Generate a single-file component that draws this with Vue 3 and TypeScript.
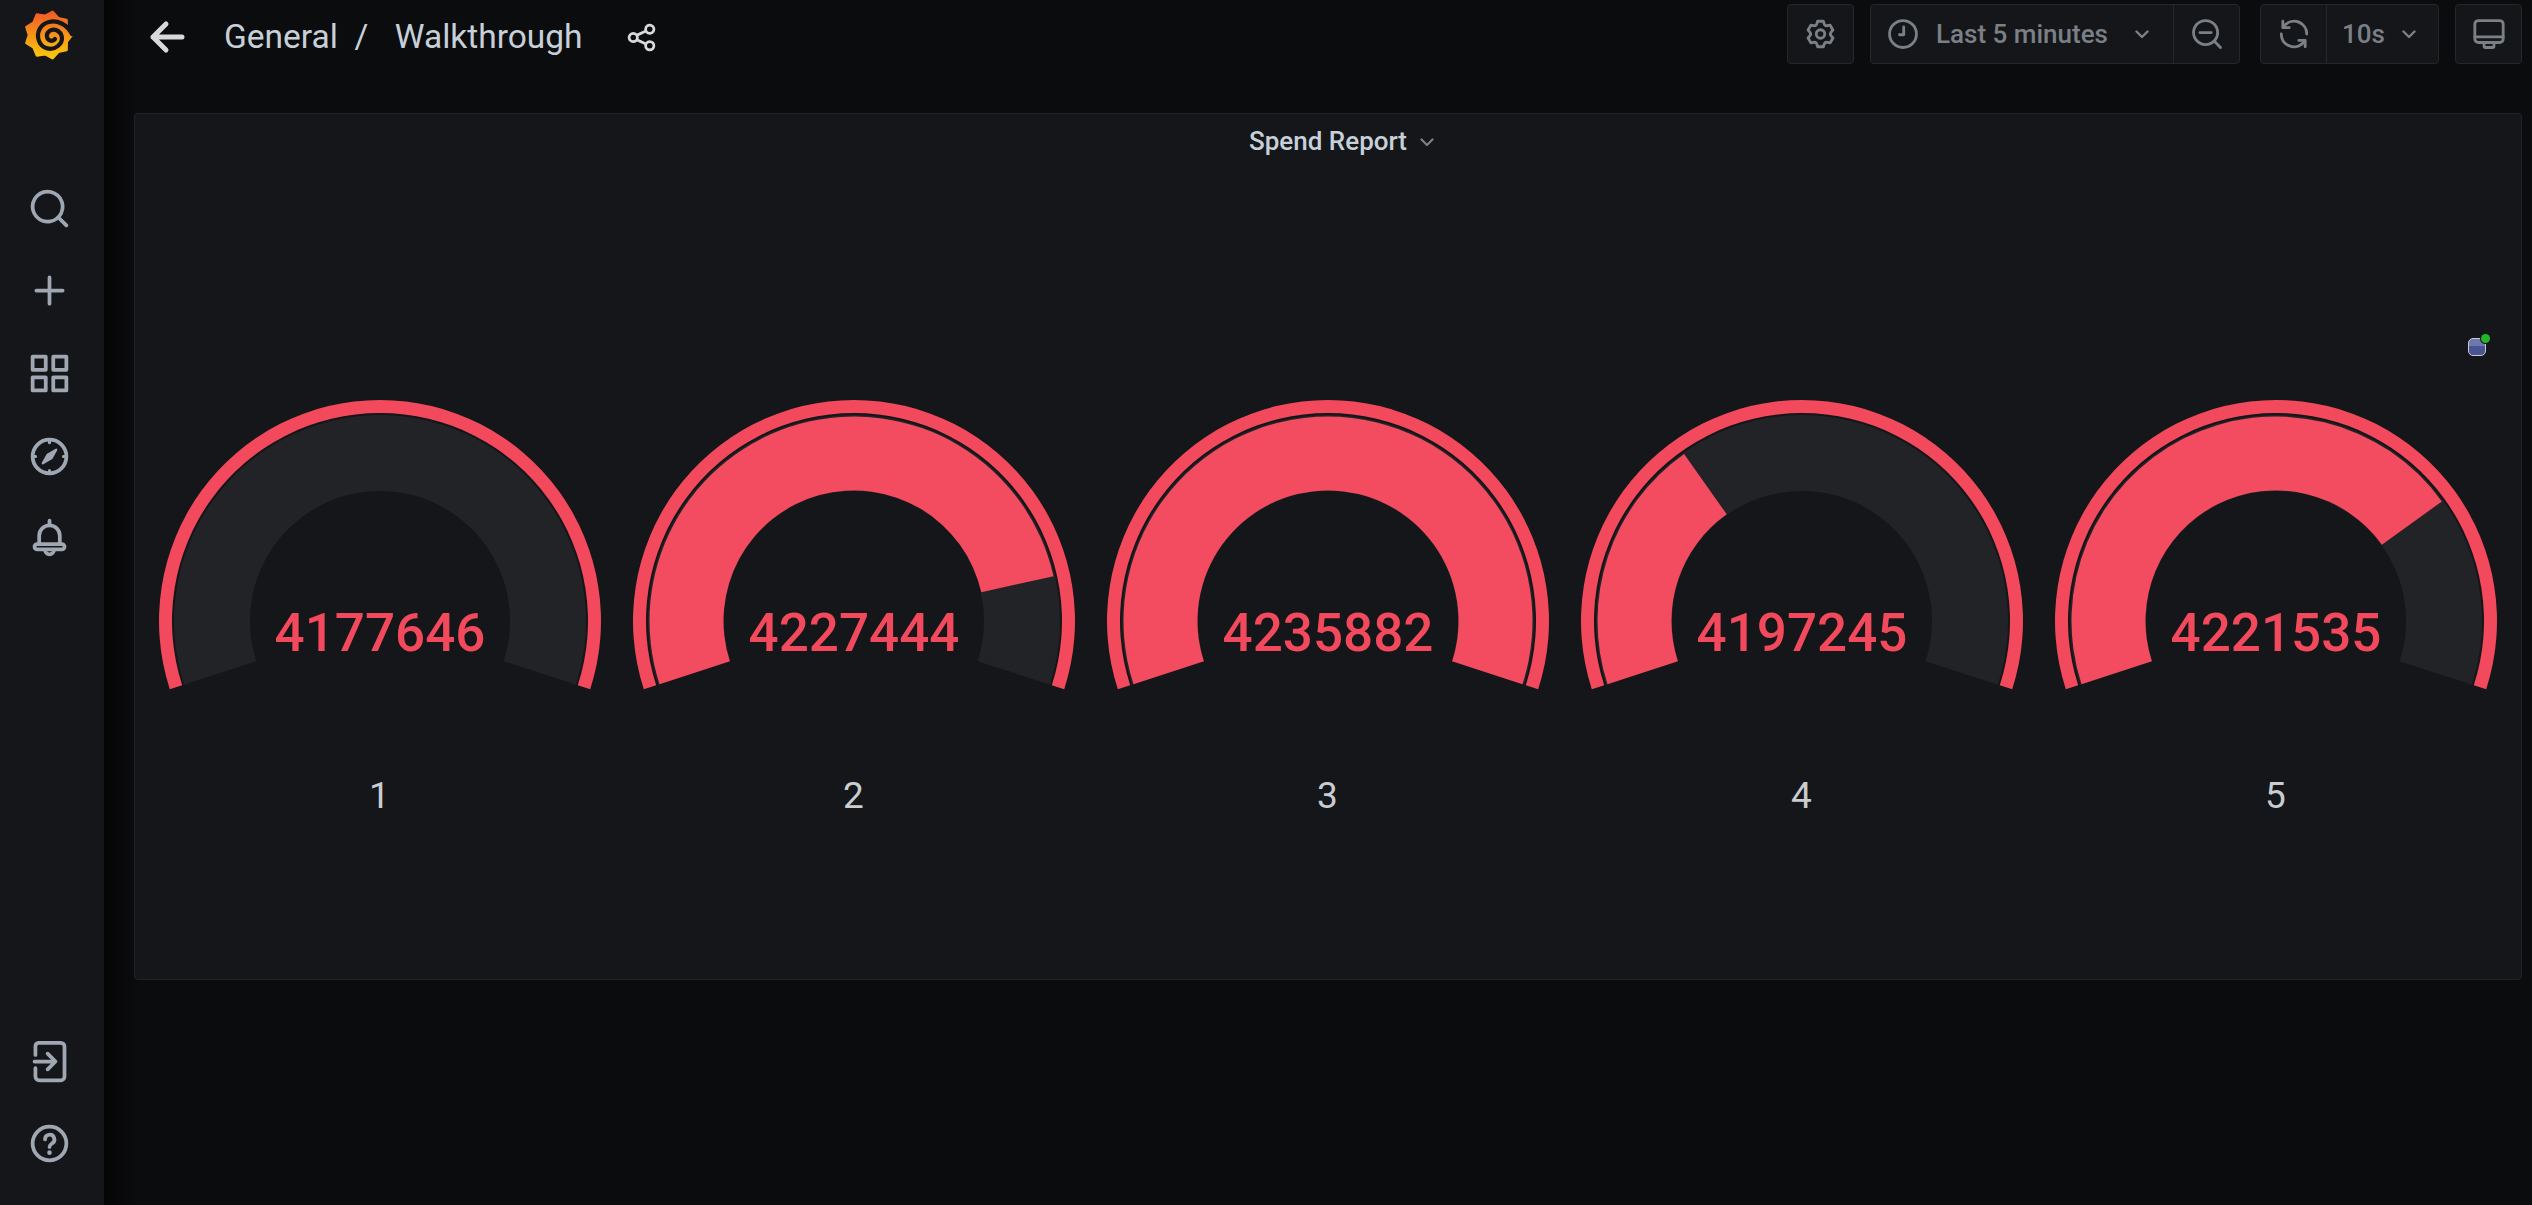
<script setup lang="ts">
interface Gauge {
  label: string
  value: number
  fraction: number
}

const gauges: Gauge[] = [
  { label: '1', value: 4177646, fraction: 0 },
  { label: '2', value: 4227444, fraction: 0.858 },
  { label: '3', value: 4235882, fraction: 1 },
  { label: '4', value: 4197245, fraction: 0.337 },
  { label: '5', value: 4221535, fraction: 0.751 },
]

const CX = 237
const CY = 241
const START = 198
const SWEEP = 216

function pt(r: number, deg: number): string {
  const a = (deg * Math.PI) / 180
  return `${(CX + r * Math.cos(a)).toFixed(2)} ${(CY - r * Math.sin(a)).toFixed(2)}`
}

function sector(outer: number, inner: number, from: number, to: number): string {
  const a0 = START - SWEEP * from
  const a1 = START - SWEEP * to
  const large = Math.abs(a0 - a1) > 180 ? 1 : 0
  return [
    `M${pt(outer, a0)}`,
    `A${outer} ${outer} 0 ${large} 1 ${pt(outer, a1)}`,
    `L${pt(inner, a1)}`,
    `A${inner} ${inner} 0 ${large} 0 ${pt(inner, a0)}`,
    'Z',
  ].join(' ')
}

const ring = sector(221, 208, 0, 1)
const track = sector(206, 130, 0, 1)
const fillPath = (f: number): string => (f > 0 ? sector(204.5, 130.5, 0, f) : '')

function logoOutline(): string {
  const cx = 33.5
  const cy = 35
  const n = 9
  let d = ''
  for (let i = 0; i < n; i++) {
    const a = ((i / n) * 360 - 80) * (Math.PI / 180)
    const b = (((i + 0.5) / n) * 360 - 80) * (Math.PI / 180)
    const tip = `${(cx + 23.5 * Math.cos(a)).toFixed(1)} ${(cy + 23.5 * Math.sin(a)).toFixed(1)}`
    const val = `${(cx + 19.5 * Math.cos(b)).toFixed(1)} ${(cy + 19.5 * Math.sin(b)).toFixed(1)}`
    d += `${i === 0 ? 'M' : 'L'}${tip} L${val} `
  }
  return d + 'Z'
}
const logo = logoOutline()
</script>

<template>
  <div class="app">
    <aside class="sidebar">
      <svg class="logo" width="66" height="70" viewBox="0 0 66 70">
        <defs>
          <linearGradient id="logoGrad" x1="0" y1="0" x2="0" y2="1">
            <stop offset="0" stop-color="#f05a28" />
            <stop offset="1" stop-color="#fbca0a" />
          </linearGradient>
        </defs>
        <path :d="logo" fill="url(#logoGrad)" stroke="url(#logoGrad)" stroke-width="2.5" stroke-linejoin="round" />
        <path
          d="M57 34 C52 24 42 20 34 22 C25 24 21 33 24 41 C27 49 37 51 43 46 C49 41 48 33 41 30 C36 28.5 31 32 32 37 C33 41 38 42 40 39"
          fill="none"
          stroke="#141619"
          stroke-width="4.2"
          stroke-linecap="round"
        />
      </svg>

      <nav class="nav">
        <a class="nav-item">
          <svg class="nav-icon" viewBox="0 0 24 24"><path fill="currentColor" d="M21.71,20.29,18,16.61A9,9,0,1,0,16.61,18l3.68,3.68a1,1,0,0,0,1.42,0A1,1,0,0,0,21.71,20.29ZM11,18a7,7,0,1,1,7-7A7,7,0,0,1,11,18Z" /></svg>
        </a>
        <a class="nav-item">
          <svg class="nav-icon" viewBox="0 0 24 24"><path fill="currentColor" d="M19,11H13V5a1,1,0,0,0-2,0v6H5a1,1,0,0,0,0,2h6v6a1,1,0,0,0,2,0V13h6a1,1,0,0,0,0-2Z" /></svg>
        </a>
        <a class="nav-item">
          <svg class="nav-icon" viewBox="0 0 24 24"><path fill="currentColor" d="M10,13H3a1,1,0,0,0-1,1v7a1,1,0,0,0,1,1h7a1,1,0,0,0,1-1V14A1,1,0,0,0,10,13ZM9,20H4V15H9ZM21,2H14a1,1,0,0,0-1,1v7a1,1,0,0,0,1,1h7a1,1,0,0,0,1-1V3A1,1,0,0,0,21,2ZM20,9H15V4h5Zm1,4H14a1,1,0,0,0-1,1v7a1,1,0,0,0,1,1h7a1,1,0,0,0,1-1V14A1,1,0,0,0,21,13Zm-1,7H15V15h5ZM10,2H3A1,1,0,0,0,2,3v7a1,1,0,0,0,1,1h7a1,1,0,0,0,1-1V3A1,1,0,0,0,10,2ZM9,9H4V4H9Z" /></svg>
        </a>
        <a class="nav-item">
          <svg class="nav-icon" viewBox="0 0 24 24" fill="none" stroke="currentColor" stroke-width="2" stroke-linecap="round" stroke-linejoin="round">
            <circle cx="12" cy="12" r="9" />
            <path d="M12 3v1.6M12 19.4V21M3 12h1.6M19.4 12H21" stroke-width="1.6" />
            <path d="M15.6 8.4L13 13L8.4 15.6L11 11Z" fill="currentColor" stroke-width="1.2" />
          </svg>
        </a>
        <a class="nav-item">
          <svg class="nav-icon" viewBox="0 0 24 24" fill="none" stroke="currentColor" stroke-width="2" stroke-linecap="round" stroke-linejoin="round">
            <path d="M12 2.5v1.5" />
            <path d="M6.5 15V10.5a5.5 5.5 0 0 1 11 0V15" />
            <rect x="4" y="15" width="16" height="2.8" rx="1.4" />
            <path d="M9.6 18a2.4 2.4 0 0 0 4.8 0" />
          </svg>
        </a>
      </nav>

      <nav class="nav nav-bottom">
        <a class="nav-item">
          <svg class="nav-icon" viewBox="0 0 24 24" fill="none" stroke="currentColor" stroke-width="2" stroke-linecap="round" stroke-linejoin="round">
            <path d="M4.5 8.5V4a2 2 0 0 1 1.6-2H18a2 2 0 0 1 2 2V20a2 2 0 0 1-2 2H6.5a2 2 0 0 1-2-2V15.5" />
            <path d="M4 12H15M11 7.8L15.2 12L11 16.2" />
          </svg>
        </a>
        <a class="nav-item">
          <svg class="nav-icon" viewBox="0 0 24 24" fill="none" stroke="currentColor" stroke-width="2" stroke-linecap="round" stroke-linejoin="round">
            <circle cx="12" cy="12" r="9" />
            <path d="M9.6 9.8a2.5 2.5 0 1 1 3.7 2.2c-.8.5-1.3 1-1.3 1.8" />
            <path d="M12 16.8v.1" stroke-width="2.4" />
          </svg>
        </a>
      </nav>
    </aside>

    <main class="main">
      <header class="topbar">
        <div class="crumbs">
          <svg class="back" width="36" height="34" viewBox="0 0 36 34" fill="none" stroke="#d8d9da" stroke-width="5" stroke-linecap="round" stroke-linejoin="round">
            <path d="M4 17H33M17 4L4 17L17 30" />
          </svg>
          <span class="crumb">General</span>
          <span class="crumb slash">/</span>
          <span class="crumb last">Walkthrough</span>
          <svg class="share" width="33" height="33" viewBox="0 0 24 24"><path fill="#d8d9da" d="M18,14a4,4,0,0,0-3.08,1.48l-5.1-2.35a3.64,3.64,0,0,0,0-2.26l5.1-2.35A4,4,0,1,0,14,6a4.17,4.17,0,0,0,.07.71L8.79,9.14a4,4,0,1,0,0,5.72l5.28,2.43A4.17,4.17,0,0,0,14,18a4,4,0,1,0,4-4ZM18,4a2,2,0,1,1-2,2A2,2,0,0,1,18,4ZM6,14a2,2,0,1,1,2-2A2,2,0,0,1,6,14Zm12,6a2,2,0,1,1,2-2A2,2,0,0,1,18,20Z" /></svg>
        </div>

        <div class="tools">
          <div class="group settings">
            <button class="btn w-settings">
              <svg class="tool-icon" viewBox="0 0 24 24"><path fill="currentColor" d="M19.9,12.66a1,1,0,0,1,0-1.32L21.18,9.9a1,1,0,0,0,.12-1.17l-2-3.46a1,1,0,0,0-1.07-.48l-1.88.38a1,1,0,0,1-1.15-.66l-.61-1.83A1,1,0,0,0,13.64,2h-4a1,1,0,0,0-1,.68L8.08,4.51a1,1,0,0,1-1.15.66L5,4.79A1,1,0,0,0,4,5.27L2,8.73A1,1,0,0,0,2.1,9.9l1.27,1.44a1,1,0,0,1,0,1.32L2.1,14.1A1,1,0,0,0,2,15.27l2,3.46a1,1,0,0,0,1.07.48l1.88-.38a1,1,0,0,1,1.15.66l.61,1.83a1,1,0,0,0,1,.68h4a1,1,0,0,0,.95-.68l.61-1.83a1,1,0,0,1,1.15-.66l1.88.38a1,1,0,0,0,1.07-.48l2-3.46a1,1,0,0,0-.12-1.17ZM18.41,14l.8.9-1.28,2.22-1.18-.24a3,3,0,0,0-3.45,2L12.92,20H10.36L10,18.86a3,3,0,0,0-3.45-2l-1.18.24L4.07,14.9l.8-.9a3,3,0,0,0,0-4l-.8-.9L5.35,6.89l1.18.24a3,3,0,0,0,3.45-2L10.36,4h2.56l.38,1.14a3,3,0,0,0,3.45,2l1.18-.24,1.28,2.22-.8.9A3,3,0,0,0,18.41,14ZM11.64,8a4,4,0,1,0,4,4A4,4,0,0,0,11.64,8Zm0,6a2,2,0,1,1,2-2A2,2,0,0,1,11.64,14Z" /></svg>
            </button>
          </div>

          <div class="group">
            <button class="btn w-time">
              <svg class="tool-icon" viewBox="0 0 24 24" fill="none" stroke="currentColor" stroke-width="2" stroke-linecap="round" stroke-linejoin="round">
                <circle cx="12" cy="12" r="9.5" />
                <path d="M12.5 7v5.5H9.5" />
              </svg>
              <span class="btn-text time-text">Last 5 minutes</span>
              <svg class="chev time-chev" width="14" height="9" viewBox="0 0 14 9" fill="none" stroke="currentColor" stroke-width="2.4" stroke-linecap="round" stroke-linejoin="round"><path d="M1.5 1.5L7 7L12.5 1.5" /></svg>
            </button>
            <button class="btn w-zoom sep">
              <svg class="tool-icon" viewBox="0 0 24 24" fill="none" stroke="currentColor" stroke-width="2" stroke-linecap="round">
                <circle cx="11" cy="11" r="8.5" />
                <path d="M17.2 17.2L21.5 21.5M7 11H15" />
              </svg>
            </button>
          </div>

          <div class="group refresh">
            <button class="btn w-refresh">
              <svg class="tool-icon" viewBox="0 0 24 24"><path fill="currentColor" d="M19.91,15.51H15.38a1,1,0,0,0,0,2h2.4A8,8,0,0,1,4,12a1,1,0,0,0-2,0,10,10,0,0,0,16.88,7.23V21a1,1,0,0,0,2,0V16.5A1,1,0,0,0,19.91,15.51ZM12,2A10,10,0,0,0,5.12,4.77V3a1,1,0,0,0-2,0V7.5a1,1,0,0,0,1,1h4.5a1,1,0,0,0,0-2H6.22A8,8,0,0,1,20,12a1,1,0,0,0,2,0A10,10,0,0,0,12,2Z" /></svg>
            </button>
            <button class="btn w-interval sep">
              <span class="btn-text">10s</span>
              <svg class="chev interval-chev" width="14" height="9" viewBox="0 0 14 9" fill="none" stroke="currentColor" stroke-width="2.4" stroke-linecap="round" stroke-linejoin="round"><path d="M1.5 1.5L7 7L12.5 1.5" /></svg>
            </button>
          </div>

          <div class="group">
            <button class="btn w-tv">
              <svg class="tool-icon" viewBox="0 0 24 24" fill="none" stroke="currentColor" stroke-width="2" stroke-linecap="round" stroke-linejoin="round">
                <rect x="2" y="2.5" width="20" height="15.5" rx="2.5" />
                <path d="M2 14H22M8.5 18V20.5A1 1 0 0 0 9.5 21.5H14.5A1 1 0 0 0 15.5 20.5V18" />
              </svg>
            </button>
          </div>
        </div>
      </header>

      <section class="panel">
        <div class="panel-head">
          <span class="panel-title">Spend Report</span>
          <svg class="panel-chev" width="14" height="9" viewBox="0 0 14 9" fill="none" stroke="#7b8087" stroke-width="2.2" stroke-linecap="round" stroke-linejoin="round"><path d="M1.5 1.5L7 7L12.5 1.5" /></svg>
        </div>

        <div class="gauges">
          <div v-for="g in gauges" :key="g.label" class="gauge">
            <svg class="gauge-svg" width="474" height="330" viewBox="0 0 474 330">
              <path :d="track" fill="#222327" />
              <path v-if="g.fraction > 0" :d="fillPath(g.fraction)" fill="#f34b5f" />
              <path :d="ring" fill="#f2495c" />
              <text class="gauge-value" :x="CX" y="271" text-anchor="middle">{{ g.value }}</text>
            </svg>
            <div class="gauge-label">{{ g.label }}</div>
          </div>
        </div>

        <div class="ext-badge"><span class="ext-dot"></span></div>
      </section>
    </main>
  </div>
</template>

<style>
html,
body {
  margin: 0;
  background: #0b0c0e;
}
</style>

<style scoped>
.app {
  display: flex;
  width: 2532px;
  height: 1205px;
  overflow: hidden;
  background: #0b0c0e;
  font-family: Roboto, "Liberation Sans", sans-serif;
}

.sidebar {
  flex: 0 0 104px;
  display: flex;
  flex-direction: column;
  background: #141619;
  padding-bottom: 20px;
  box-sizing: border-box;
}
.logo {
  display: block;
  margin-left: 15px;
  flex: none;
}
.nav {
  display: flex;
  flex-direction: column;
  margin-top: 97px;
}
.nav-bottom {
  margin-top: auto;
}
.nav-item {
  height: 82.6px;
  display: flex;
  align-items: center;
  justify-content: center;
  padding-right: 5px;
  color: #9fa7b3;
}
.nav-icon {
  width: 45px;
  height: 45px;
  display: block;
}

.main {
  flex: 1;
  min-width: 0;
  display: flex;
  flex-direction: column;
  background: linear-gradient(90deg, #050506 0, #0b0c0e 36px);
}

.topbar {
  height: 64px;
  box-sizing: border-box;
  display: flex;
  justify-content: space-between;
  padding: 4px 10px 0 45px;
}
.crumbs {
  display: flex;
  align-items: center;
  height: 60px;
  padding-top: 6px;
  box-sizing: border-box;
}
.back {
  margin-right: 39px;
}
.crumb {
  font-size: 33.5px;
  color: #c7d0d9;
  line-height: 40px;
}
.slash {
  margin-left: 16.5px;
}
.last {
  margin-left: 26.5px;
}
.share {
  margin-left: 42px;
}

.tools {
  display: flex;
  align-items: flex-start;
  gap: 16px;
}
.refresh {
  margin-left: 4px;
}
.group {
  display: flex;
  height: 60px;
  box-sizing: border-box;
  border: 1px solid #25272b;
  border-radius: 4px;
  background: #141619;
  overflow: hidden;
}
.btn {
  display: flex;
  align-items: center;
  height: 100%;
  padding: 0;
  border: 0;
  background: transparent;
  color: #7b8087;
  font-family: inherit;
  box-sizing: border-box;
}
.sep {
  border-left: 1px solid #25272b;
}
.tool-icon {
  width: 34px;
  height: 34px;
  display: block;
  flex: none;
}
.btn-text {
  font-size: 26px;
  font-weight: 500;
  color: #7b8087;
  white-space: nowrap;
}
.w-settings,
.w-tv {
  width: 65px;
  justify-content: center;
}
.w-time {
  width: 302px;
  padding-left: 15px;
}
.time-text {
  margin-left: 16px;
}
.time-chev {
  margin-left: 27px;
}
.w-zoom {
  width: 66px;
  justify-content: center;
}
.w-refresh {
  width: 65px;
  justify-content: center;
}
.w-interval {
  width: 112px;
  padding-left: 15px;
}
.interval-chev {
  margin-left: 17px;
}

.panel {
  position: relative;
  flex: none;
  margin: 49px 10px 0 30px;
  height: 867px;
  box-sizing: border-box;
  border: 1px solid #202226;
  border-radius: 4px;
  background: #141619;
  padding: 0 7.5px;
}
.panel-head {
  height: 50px;
  display: flex;
  align-items: center;
  justify-content: center;
  padding-top: 3px;
  box-sizing: border-box;
}
.panel-title {
  font-size: 26px;
  font-weight: 500;
  color: #c7d0d9;
  line-height: 30px;
}
.panel-chev {
  margin-left: 13px;
  margin-right: -27px;
  margin-top: 4px;
}
.gauges {
  display: grid;
  grid-template-columns: repeat(5, 474px);
  margin-top: 216px;
}
.gauge {
  display: flex;
  flex-direction: column;
  align-items: center;
}
.gauge-svg {
  display: block;
}
.gauge-value {
  font-family: Roboto, "Liberation Sans", sans-serif;
  font-size: 53px;
  font-weight: 500;
  fill: #f2495c;
}
.gauge-label {
  margin-top: 64px;
  font-size: 37px;
  line-height: 44px;
  color: #c9ccd1;
}

.ext-badge {
  position: absolute;
  left: 2333px;
  top: 224px;
  width: 18px;
  height: 18px;
  box-sizing: border-box;
  border: 1px solid #c9cbd3;
  border-radius: 5px;
  background: linear-gradient(180deg, #6f78ad 0 45%, #4a5394 45% 100%);
}
.ext-dot {
  position: absolute;
  right: -5px;
  top: -5px;
  width: 9px;
  height: 9px;
  border-radius: 50%;
  background: #22b52a;
  box-shadow: 0 0 0 1px #141619;
}
</style>
